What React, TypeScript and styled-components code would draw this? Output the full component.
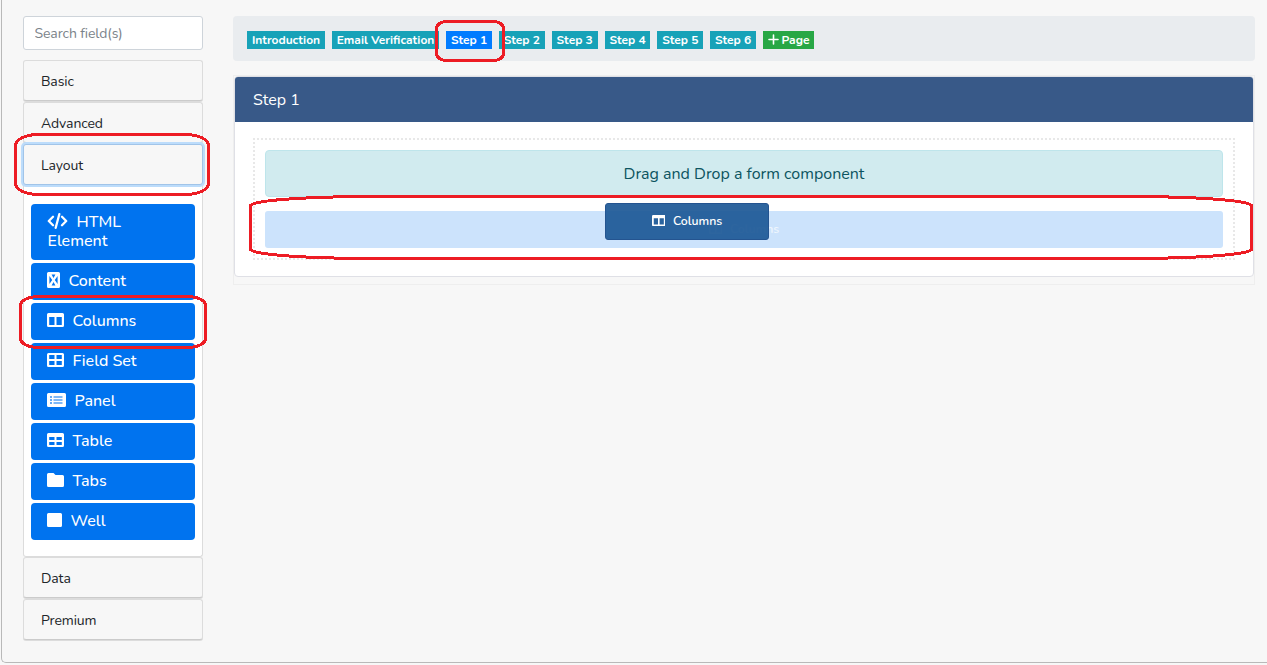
import React from 'react';
import styled, { createGlobalStyle } from 'styled-components';

const GlobalStyle = createGlobalStyle`
  *, *::before, *::after { box-sizing: border-box; }
  body {
    margin: 0;
    background: #f7f7f7;
    color: #212529;
    font-family: Nunito, Lato, "Open Sans", sans-serif;
    font-size: 16px;
    overflow: hidden;
  }
`;

const Page = styled.div`
  position: relative;
  width: 1267px;
  height: 665px;
  padding-left: 1px;
`;

const Frame = styled.div`
  display: flex;
  align-items: flex-start;
  gap: 30px;
  width: 1266px;
  height: 663px;
  padding: 16px 12px 0 21px;
  border: 1px solid #b9b9b9;
  border-width: 0 0 1px 1px;
  border-radius: 0 0 0 5px;
`;

const Sidebar = styled.aside`
  display: flex;
  flex-direction: column;
  width: 180px;
  flex: none;
`;

const Search = styled.input`
  width: 180px;
  height: 34px;
  margin: 0 0 10px;
  padding: 0 10.5px;
  border: 1px solid #ced4da;
  border-radius: 3px;
  background: #fff;
  font: 14px Nunito, Lato, sans-serif;
  letter-spacing: -0.1px;
  outline: none;
  &::placeholder { color: #7b838a; opacity: 1; }
`;

const GroupHeader = styled.button<{ $focused?: boolean }>`
  position: relative;
  height: 41px;
  margin-bottom: 1px;
  padding: 2px 17px 0;
  border: 1px solid ${p => (p.$focused ? '#a1c4e8' : '#dcdcdc')};
  border-bottom-color: ${p => (p.$focused ? '#a1c4e8' : '#cbcbcb')};
  border-radius: 3px;
  box-shadow: ${p => (p.$focused ? '0 0 0 2px #bcdcfb' : '0 1px 0 #dcdcdc')};
  background: #f7f7f7;
  color: #212529;
  font: 14px Nunito, Lato, sans-serif;
  letter-spacing: -0.1px;
  text-align: left;
`;

const GroupBody = styled.div`
  display: flex;
  flex-direction: column;
  gap: 3px;
  height: 371px;
  padding: 18px 7px 0;
  border: 1px solid #dcdcdc;
  border-top: 0;
  border-radius: 0 0 3px 3px;
  background: #fff;
`;

const Component = styled.div`
  padding: 9px 16px 9px 16.5px;
  border-radius: 4px;
  background: #0073ef;
  color: #fff;
  font-weight: 500;
  line-height: 19px;
`;

const Glyph = styled.svg<{ $gap: number; $drop: number; $pull: number }>`
  display: inline-block;
  vertical-align: ${p => -p.$drop}px;
  margin: -2px ${p => p.$gap}px -2px ${p => -p.$pull}px;
  fill: currentColor;
  fill-rule: evenodd;
`;

const Main = styled.main`
  flex: 1;
  min-width: 0;
`;

const Steps = styled.nav`
  display: flex;
  align-items: center;
  gap: 7px;
  height: 45px;
  padding: 2px 14px 0;
  border-radius: 4px;
  background: #e9ecef;
`;

const Badge = styled.span<{ $w: number; $bg?: string }>`
  display: flex;
  align-items: center;
  justify-content: center;
  gap: 3px;
  width: ${p => p.$w}px;
  height: 18px;
  background: ${p => p.$bg ?? '#17a2b8'};
  color: #fff;
  font-size: 12px;
  font-weight: 700;
  white-space: nowrap;
`;

const Builder = styled.section`
  height: 210px;
  margin-top: 14px;
  border: 1px solid #eee;
`;

const Card = styled.div`
  height: 201px;
  border: 1px solid #dfe0e6;
  border-radius: 4px;
  background: #fff;
  overflow: hidden;
`;

const CardHeader = styled.header`
  display: flex;
  align-items: center;
  height: 45px;
  padding-left: 18px;
  background: #385988;
  color: #fff;
`;

const DropZone = styled.div`
  display: flex;
  flex-direction: column;
  gap: 14px;
  height: 122px;
  margin: 16px 18px 0;
  padding: 10px;
  border: 2px dotted #e8e8e8;
`;

const DropHint = styled.div`
  display: flex;
  align-items: center;
  justify-content: center;
  height: 47px;
  border: 1px solid #bee5eb;
  border-radius: 4px;
  background: #d1ebef;
  color: #0c5460;
`;

const Placeholder = styled.div`
  display: flex;
  align-items: center;
  justify-content: center;
  height: 37px;
  padding-bottom: 2px;
  border-radius: 3px;
  background: #cce3fc;
  color: #eef6fe;
  font-size: 12.3px;
  font-weight: 600;
`;

const Dragged = styled.div`
  position: absolute;
  left: 605px;
  top: 203px;
  display: flex;
  align-items: center;
  justify-content: center;
  width: 164px;
  height: 37px;
  padding-bottom: 2px;
  border: 1px solid #245490;
  border-radius: 3px;
  background: rgba(28, 88, 150, 0.92);
  color: #fff;
  font-size: 12.3px;
  font-weight: 600;
`;

const Markup = styled.svg`
  position: absolute;
  inset: 0;
  fill: none;
  stroke: #ed1c24;
  stroke-width: 3;
  shape-rendering: crispEdges;
  pointer-events: none;
`;

type IconDef = { w: number; h: number; d: string; stroke?: boolean };

const block = (w: number) =>
  `M1.5 0H${w - 1.5}A1.5 1.5 0 0 1 ${w} 1.5V12.5A1.5 1.5 0 0 1 ${w - 1.5} 14H1.5A1.5 1.5 0 0 1 0 12.5V1.5A1.5 1.5 0 0 1 1.5 0Z`;

const icons: Record<string, IconDef> = {
  code: { w: 21, h: 16, d: 'M6 3.8 1.8 8 6 12.2M15 3.8 19.2 8 15 12.2M12.3 1.2 8.7 14.8', stroke: true },
  content: { w: 13, h: 16, d: 'M1.5 0h10A1.5 1.5 0 0 1 13 1.5v13a1.5 1.5 0 0 1-1.5 1.5h-10A1.5 1.5 0 0 1 0 14.5v-13A1.5 1.5 0 0 1 1.5 0ZM4.6 2.6H8.4L6.5 6ZM4.6 13.4H8.4L6.5 10ZM2.4 4V12L5.2 8ZM10.6 4V12L7.8 8Z' },
  columns: { w: 17, h: 14, d: `${block(17)}M2.2 4V12H7.5V4ZM9.5 4V12H14.8V4Z` },
  grid: { w: 17, h: 14, d: `${block(17)}M2.2 2V6H7.5V2ZM9.5 2V6H14.8V2ZM2.2 8V12H7.5V8ZM9.5 8V12H14.8V8Z` },
  table: { w: 17, h: 14, d: `${block(17)}M2.2 4V7H7.5V4ZM9.5 4V7H14.8V4ZM2.2 9V12H7.5V9ZM9.5 9V12H14.8V9Z` },
  list: { w: 19, h: 14, d: `${block(19)}M3.2 3.2V4.8H4.8V3.2ZM6.5 3.4V4.6H15.5V3.4ZM3.2 6.2V7.8H4.8V6.2ZM6.5 6.4V7.6H15.5V6.4ZM3.2 9.2V10.8H4.8V9.2ZM6.5 9.4V10.6H15.5V9.4Z` },
  folder: { w: 17, h: 14, d: 'M1.5 0H6.5L8.5 2H15.5A1.5 1.5 0 0 1 17 3.5V12.5A1.5 1.5 0 0 1 15.5 14H1.5A1.5 1.5 0 0 1 0 12.5V1.5A1.5 1.5 0 0 1 1.5 0Z' },
  square: { w: 15, h: 14, d: block(15) },
};

function Icon({ name, gap, scale = 1, pull = 0 }: { name: string; gap: number; scale?: number; pull?: number }) {
  const i = icons[name];
  return (
    <Glyph
      $gap={gap}
      $drop={i.h === 16 ? 0 : -1}
      $pull={pull}
      width={i.w * scale}
      height={i.h * scale}
      viewBox={`0 0 ${i.w} ${i.h}`}
    >
      {i.stroke
        ? <path d={i.d} fill="none" stroke="currentColor" strokeWidth="2.3" strokeLinecap="round" strokeLinejoin="round" />
        : <path d={i.d} />}
    </Glyph>
  );
}

const components = [
  { icon: 'code', text: 'HTML Element' },
  { icon: 'content', text: 'Content' },
  { icon: 'columns', text: 'Columns' },
  { icon: 'grid', text: 'Field Set' },
  { icon: 'list', text: 'Panel' },
  { icon: 'table', text: 'Table' },
  { icon: 'folder', text: 'Tabs' },
  { icon: 'square', text: 'Well' },
];

const steps = [
  { text: 'Introduction', w: 78 },
  { text: 'Email Verification', w: 107 },
  { text: 'Step 1', w: 46, bg: '#007bff' },
  { text: 'Step 2', w: 45.8 },
  { text: 'Step 3', w: 45.8 },
  { text: 'Step 4', w: 45.8 },
  { text: 'Step 5', w: 45.8 },
  { text: 'Step 6', w: 45.8 },
];

export default function App() {
  return (
    <Page>
      <GlobalStyle />
      <Frame>
        <Sidebar>
          <Search placeholder="Search field(s)" />
          <GroupHeader>Basic</GroupHeader>
          <GroupHeader>Advanced</GroupHeader>
          <GroupHeader $focused>Layout</GroupHeader>
          <GroupBody>
            {components.map(c => (
              <Component key={c.text}>
                <Icon name={c.icon} gap={9} pull={0.9} />
                {c.text}
              </Component>
            ))}
          </GroupBody>
          <GroupHeader>Data</GroupHeader>
          <GroupHeader>Premium</GroupHeader>
        </Sidebar>
        <Main>
          <Steps>
            {steps.map(s => (
              <Badge key={s.text} $w={s.w} $bg={s.bg}>{s.text}</Badge>
            ))}
            <Badge $w={51} $bg="#28a745">
              <svg width="11" height="11" viewBox="0 0 11 11">
                <path d="M5.5 1V10M1 5.5H10" stroke="#fff" strokeWidth="1.6" strokeLinecap="round" />
              </svg>
              Page
            </Badge>
          </Steps>
          <Builder>
            <Card>
              <CardHeader>Step 1</CardHeader>
              <DropZone>
                <DropHint>Drag and Drop a form component</DropHint>
                <Placeholder>
                  <Icon name="columns" gap={7.6} scale={0.8} />
                  Columns
                </Placeholder>
              </DropZone>
            </Card>
          </Builder>
        </Main>
      </Frame>
      <Dragged>
        <Icon name="columns" gap={7.6} scale={0.8} />
        Columns
      </Dragged>
      <Markup width="1267" height="665" viewBox="0 0 1267 665">
        <rect x="15.5" y="134.5" width="193" height="60" rx="23" ry="11" />
        <rect x="20.5" y="296.5" width="185" height="51" rx="18" ry="9" />
        <rect x="436.5" y="21.5" width="67" height="39" rx="10" ry="7" />
        <rect x="250.5" y="196.5" width="1001" height="62" rx="125" ry="9" />
      </Markup>
    </Page>
  );
}
